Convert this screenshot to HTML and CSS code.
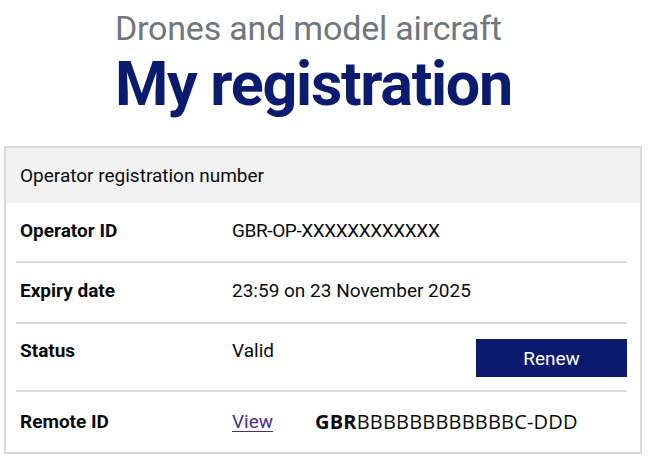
FILE: index.html
```html
<!DOCTYPE html>
<html lang="en">
<head>
    <meta charset="UTF-8">
    <title>My registration</title>
    <link rel="stylesheet" href="styles.css">
</head>
<body>
    <header class="page-head">
        <p class="caption">Drones and model aircraft</p>
        <h1>My registration</h1>
    </header>

    <div class="card">
        <div class="card-head">Operator registration number</div>
        <div class="row">
            <div class="key">Operator ID</div>
            <div class="value id-value">GBR-OP-XXXXXXXXXXXX</div>
        </div>
        <div class="row row-date">
            <div class="key">Expiry date</div>
            <div class="value">23:59 on 23 November 2025</div>
        </div>
        <div class="row row-action">
            <div class="key">Status</div>
            <div class="value">Valid</div>
            <button class="renew">Renew</button>
        </div>
        <div class="row row-last">
            <div class="key">Remote ID</div>
            <div class="value"><a href="#" class="link">View</a></div>
            <div class="remote-id"><b>GBR</b>BBBBBBBBBBBBC-DDD</div>
        </div>
    </div>
</body>
</html>
```

FILE: styles.css
```css
body {
    margin: 0;
    font-family: Roboto, 'Liberation Sans', sans-serif;
    color: #0b0c0c;
    background: #fff;
}
.page-head {
    padding-left: 115px;
    padding-top: 8px;
}
.caption {
    margin: 0;
    font-size: 34px;
    color: #6f777b;
    line-height: 40px;
    letter-spacing: -0.2px;
}
h1 {
    margin: 0;
    font-size: 61px;
    font-weight: 700;
    color: #0b1c6e;
    line-height: 72px;
    letter-spacing: -1.3px;
}
.card {
    margin: 26px 0 0 4px;
    width: 634px;
    border: 2px solid #d9d9d9;
}
.card-head {
    background: #f2f2f2;
    height: 55px;
    padding-left: 14px;
    font-size: 19px;
    line-height: 55px;
}
.row {
    display: flex;
    align-items: flex-start;
    margin: 0 13px 0 10px;
    padding: 16px 0 18px 4px;
    border-bottom: 2px solid #dcdcdc;
    font-size: 19px;
    line-height: 24px;
}
.row-date {
    padding-bottom: 19px;
}
.row-action {
    padding-top: 15px;
    padding-bottom: 13px;
}
.row-last {
    border-bottom: none;
    padding-top: 18px;
    padding-bottom: 18px;
}
.key {
    width: 212px;
    font-weight: 700;
}
.value {
    width: 83px;
    white-space: nowrap;
}
.id-value {
    letter-spacing: -0.4px;
}
.link {
    color: #4c2c92;
    text-decoration: underline;
    text-underline-offset: 3px;
}
.renew {
    margin-left: auto;
    width: 151px;
    height: 38px;
    border: none;
    background: #0b1a6e;
    color: #fff;
    font-family: Roboto, sans-serif;
    font-size: 19px;
    cursor: pointer;
}
.remote-id {
    font-family: 'Open Sans', sans-serif;
    font-size: 20px;
    letter-spacing: 0.2px;
}
```
